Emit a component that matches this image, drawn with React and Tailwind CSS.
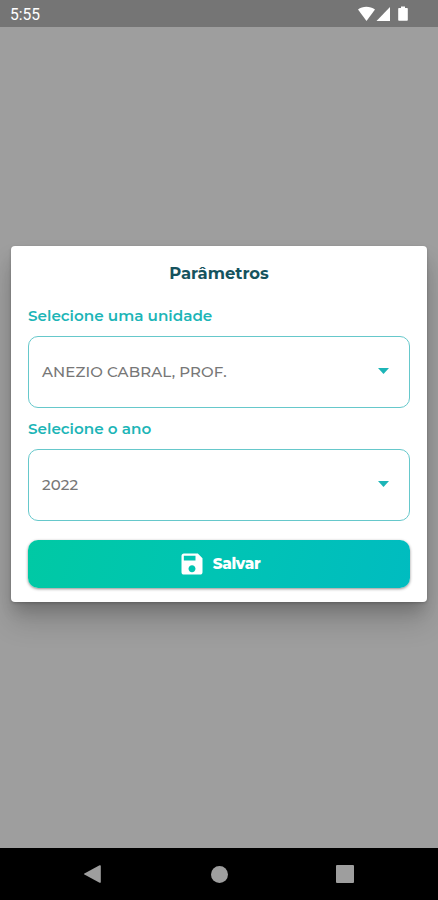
import React from "react";

const StatusBar = () => (
  <header className="flex h-[27px] shrink-0 items-center justify-between bg-[#757575] pl-[10px] pr-[29px] text-white">
    <span className="pt-[2px] font-[Roboto,sans-serif] text-[15.6px] leading-5">
      5:55
    </span>
    <svg width="52" height="16" viewBox="0 0 52 16" fill="currentColor" aria-hidden="true">
      <path d="M1 3.5C5.5 -0.2 13 -0.2 18 3.5L9.5 15Z" />
      <path d="M33 1v14H19.5Z" />
      <path d="M42 2h2V.6h4V2h2q.8 0 .8.8v11.2q0 .8-.8.8h-8q-.8 0-.8-.8V2.8q0-.8.8-.8Z" />
    </svg>
  </header>
);

const SelectField = ({ label, value }) => (
  <div className="flex flex-col">
    <label className="h-[26px] text-[15.2px] leading-[26px] font-semibold text-[#1cb5b7]">
      {label}
    </label>
    <button
      type="button"
      className="mt-[7px] flex h-[72px] items-center justify-between rounded-[10px] border border-[#66c8cb] pr-[20px] pl-[13px] text-[15px] font-medium tracking-[0.1px] text-[#777777]"
    >
      {value}
      <svg className="mb-[2px]" width="12" height="6" viewBox="0 0 12 6" fill="#1cb5b7" aria-hidden="true">
        <path d="M1 0h11L6.5 6Z" />
      </svg>
    </button>
  </div>
);

const SaveIcon = () => (
  <svg width="28" height="28" viewBox="0 0 24 24" fill="currentColor" aria-hidden="true">
    <path d="M17 3H5c-1.11 0-2 .9-2 2v14c0 1.1.89 2 2 2h14c1.1 0 2-.9 2-2V7l-4-4zm-5 16c-1.66 0-3-1.34-3-3s1.34-3 3-3 3 1.34 3 3-1.34 3-3 3zm3-10H5V5h10v4z" />
  </svg>
);

const NavigationBar = () => (
  <nav className="flex h-[52px] shrink-0 items-center justify-between bg-black pr-[84px] pl-[84px] text-[#9e9e9e]">
    <svg width="18" height="18" viewBox="0 0 18 18" fill="currentColor">
      <path d="M15.6 0.3Q16.8 -.2 16.8 1V17Q16.8 18.2 15.6 17.7L0.4 9.6Q-.4 9 .4 8.4Z" />
    </svg>
    <span className="size-[17px] rounded-full bg-[#9e9e9e]" />
    <span className="size-[18px] rounded-[1px] bg-[#9e9e9e]" />
  </nav>
);

function App() {
  return (
    <div className="flex h-screen flex-col bg-[#9e9e9e] font-[Montserrat,Inter,sans-serif]">
      <StatusBar />
      <main className="flex flex-1 flex-col overflow-hidden px-[11px] pt-[219px]">
        <section
          role="dialog"
          className="flex h-[356px] flex-col rounded-[4px] bg-white px-[17px] shadow-[0_1px_3px_rgba(0,0,0,0.2),0_20px_28px_0px_rgba(0,0,0,0.16),0_11px_15px_-3px_rgba(0,0,0,0.16)]"
        >
          <h1 className="pt-[14px] text-center text-[16.4px] leading-[26px] font-bold text-[#15535e]">
            Parâmetros
          </h1>
          <div className="mt-[17px] flex flex-col gap-[8px]">
            <SelectField label="Selecione uma unidade" value="ANEZIO CABRAL, PROF." />
            <SelectField label="Selecione o ano" value="2022" />
          </div>
          <button
            type="button"
            className="mt-[19px] flex h-[48px] items-center justify-center gap-[7px] rounded-[10px] bg-linear-[105deg,#00c9a4,#00c4b4_50%,#00bcc0] text-[15.2px] font-extrabold tracking-[-0.3px] text-white shadow-[0_1px_3px_rgba(0,0,0,0.45)]"
          >
            <SaveIcon />
            <span className="pt-px">Salvar</span>
          </button>
        </section>
      </main>
      <NavigationBar />
    </div>
  );
}

export default App;
